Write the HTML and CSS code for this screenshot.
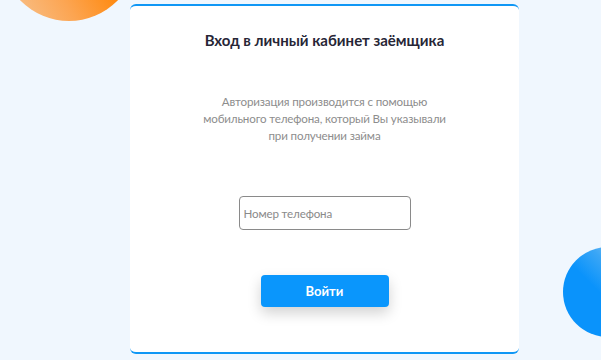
FILE: index.html
```html
<!DOCTYPE html>
<html lang="ru">
<head>
<meta charset="utf-8">
<link rel="stylesheet" href="styles.css">
</head>
<body>
<div class="page">
  <div class="blob blob-orange"></div>
  <div class="blob blob-blue"></div>
  <div class="card">
    <h1 class="title">Вход в личный кабинет заёмщика</h1>
    <p class="info">Авторизация производится с помощью<br>мобильного телефона, который Вы указывали<br>при получении займа</p>
    <input class="phone" type="text" placeholder="Номер телефона">
    <button class="btn">Войти</button>
  </div>
</div>
</body>
</html>
```
FILE: styles.css
```css
html, body {
  margin: 0;
  padding: 0;
}
body {
  background: #f0f7fe;
  font-family: Lato, "Open Sans", sans-serif;
  overflow: hidden;
}
.page {
  position: relative;
  width: 601px;
  height: 360px;
  overflow: hidden;
}
.blob {
  position: absolute;
  border-radius: 50%;
}
.blob-orange {
  left: 1px;
  top: -115px;
  width: 136px;
  height: 136px;
  background: linear-gradient(60deg, #f6c89a 0%, #fca552 35%, #ff8a10 60%, #ff8000 100%);
}
.blob-blue {
  left: 563px;
  top: 247px;
  width: 90px;
  height: 90px;
  background: linear-gradient(225deg, #bcdcf5 0%, #3aa6f6 35%, #0a93fb 55%, #0a93fb 100%);
}
.card {
  position: relative;
  margin: 4px 0 0 130px;
  width: 389px;
  height: 350px;
  box-sizing: border-box;
  background: #fff;
  border-top: 2px solid #0f97f5;
  border-bottom: 2px solid #0f97f5;
  border-radius: 6px;
  display: flex;
  flex-direction: column;
  align-items: center;
}
.title {
  margin: 25px 0 0;
  font-size: 15px;
  font-weight: 700;
  color: #272636;
  line-height: 18px;
}
.info {
  margin: 44px 0 0;
  font-size: 11.6px;
  letter-spacing: -0.15px;
  line-height: 17px;
  color: #8d8d8d;
  text-align: center;
}
.phone {
  margin: 52px 0 0;
  width: 172px;
  height: 34px;
  box-sizing: border-box;
  border: 1px solid #8a8a8a;
  border-radius: 4px;
  padding: 0 4px;
  font-family: Lato, "Open Sans", sans-serif;
  font-size: 11.6px;
  letter-spacing: -0.15px;
  color: #333;
  outline: none;
}
.phone::placeholder {
  color: #8a8a8a;
}
.btn {
  margin: 45px 0 0;
  width: 128px;
  height: 32px;
  border: none;
  border-radius: 4px;
  background: #0a96fc;
  color: #fff;
  font-family: Lato, "Open Sans", sans-serif;
  font-size: 13px;
  font-weight: 700;
  box-shadow: 0 6px 14px rgba(0, 0, 0, 0.18);
}
```
